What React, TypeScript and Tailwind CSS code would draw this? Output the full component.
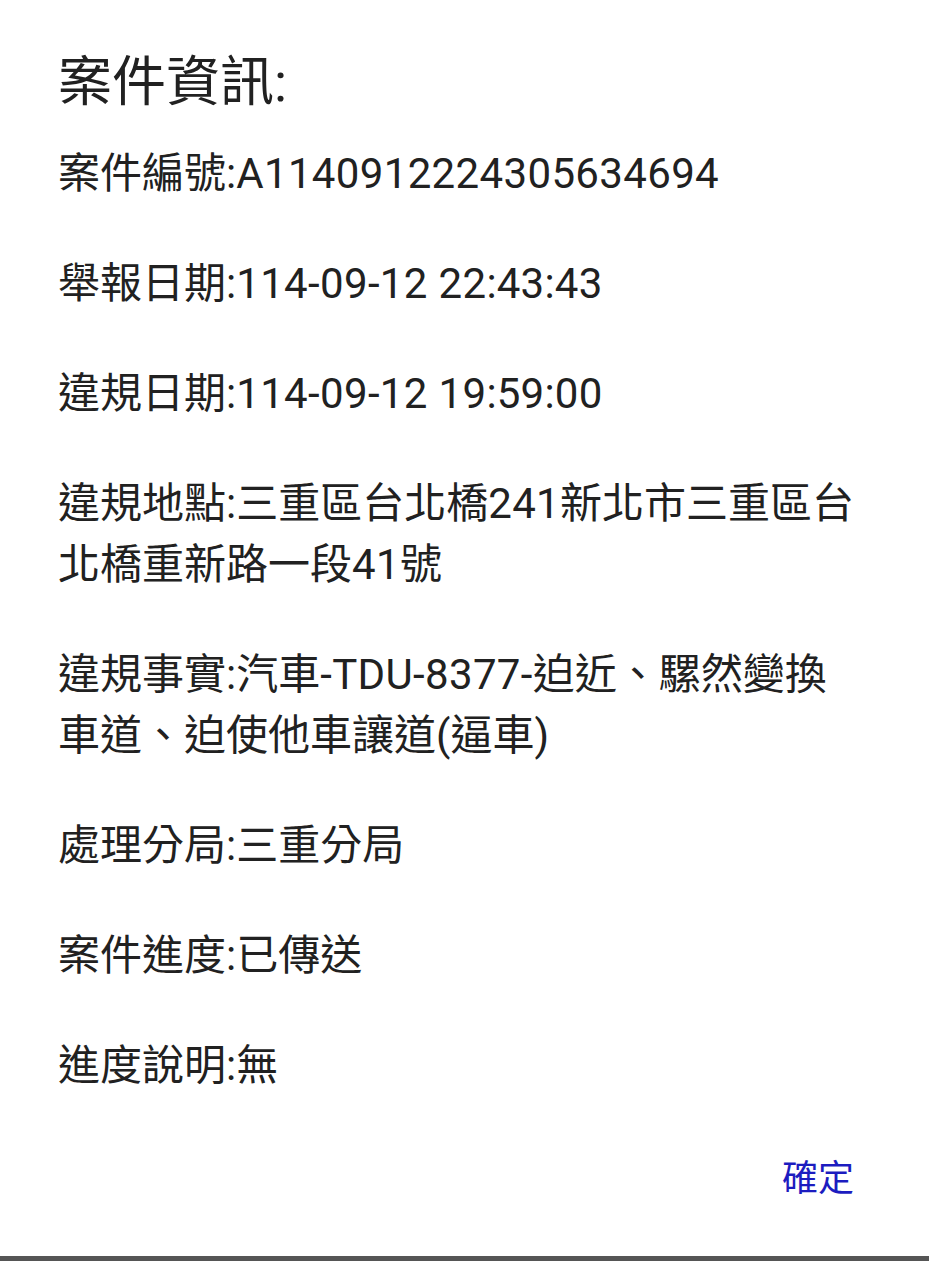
import React from "react";

const rows: string[] = [
  "案件編號:A1140912224305634694",
  "舉報日期:114-09-12 22:43:43",
  "違規日期:114-09-12 19:59:00",
  "違規地點:三重區台北橋241新北市三重區台北橋重新路一段41號",
  "違規事實:汽車-TDU-8377-迫近、騾然變換車道、迫使他車讓道(逼車)",
  "處理分局:三重分局",
  "案件進度:已傳送",
  "進度說明:無",
];

function Line({ text }: { text: string }) {
  const parts = text.split(/([A-Za-z0-9\- ]+)/).filter((p) => p.length > 0);
  return (
    <>
      {parts.map((p, i) =>
        /^[A-Za-z0-9\- ]+$/.test(p) ? (
          <span key={i} className="tracking-[0.35px]">
            {p}
          </span>
        ) : (
          <span key={i}>{p}</span>
        )
      )}
    </>
  );
}

export default function App() {
  return (
    <div
      className="h-[1261px] w-[929px] bg-white flex flex-col text-[#212121]"
      style={{ fontFamily: 'Roboto, "Noto Sans CJK TC", sans-serif' }}
    >
      <div className="pl-[58px] pt-[44px]">
        <h1 className="text-[54px] leading-[78px] font-normal">案件資訊:</h1>
        <div className="mt-[21px] w-[807px] flex flex-col gap-[49px]">
          {rows.map((r) => (
            <p key={r} className="text-[42px] leading-[61px]">
              <Line text={r} />
            </p>
          ))}
        </div>
      </div>
      <div className="mt-[59px] flex justify-end pr-[75px]">
        <button className="text-[36px] leading-[48px] text-[#1c1cc0]">確定</button>
      </div>
      <div className="mt-auto h-[5px] bg-[#555555]" />
    </div>
  );
}
